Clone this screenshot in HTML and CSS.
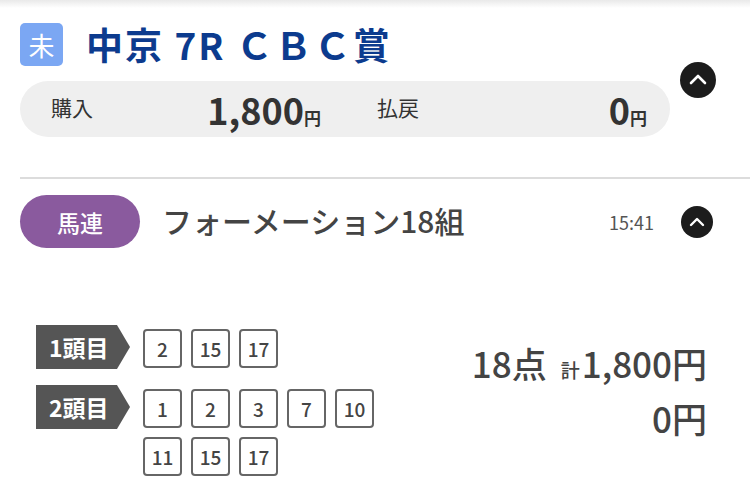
FILE: index.html
```html
<!DOCTYPE html>
<html lang="ja">
<head>
<meta charset="utf-8">
<link rel="stylesheet" href="styles.css">
</head>
<body>
<div class="shade"></div>
<header class="top">
  <div class="top-main">
    <div class="title-row">
      <div class="badge">未</div>
      <h1 class="title">中京 7R ＣＢＣ賞</h1>
    </div>
    <div class="summary">
      <div class="sum-item">
        <span class="sum-label">購入</span>
        <span class="sum-value">1,800<span class="yen">円</span></span>
      </div>
      <div class="sum-item">
        <span class="sum-label">払戻</span>
        <span class="sum-value">0<span class="yen">円</span></span>
      </div>
    </div>
  </div>
  <svg class="chev chev-lg" viewBox="0 0 36 36" aria-hidden="true">
    <circle cx="18" cy="18" r="18" fill="#1c1c1c"/>
    <polyline points="11,21 18,14 25,21" fill="none" stroke="#fff" stroke-width="2.6" stroke-linecap="round" stroke-linejoin="round"/>
  </svg>
</header>
<div class="divider"></div>
<section class="bet-row">
  <div class="bet-type">馬連</div>
  <div class="bet-name">フォーメーション18組</div>
  <div class="time">15:41</div>
  <svg class="chev chev-sm" viewBox="0 0 32 32" aria-hidden="true">
    <circle cx="16" cy="16" r="16" fill="#1c1c1c"/>
    <polyline points="10,19 16,13 22,19" fill="none" stroke="#fff" stroke-width="2.4" stroke-linecap="round" stroke-linejoin="round"/>
  </svg>
</section>
<section class="detail">
  <div class="groups">
    <div class="group">
      <div class="pos-label">1頭目</div>
      <div class="boxes">
        <span class="num">2</span><span class="num">15</span><span class="num">17</span>
      </div>
    </div>
    <div class="group">
      <div class="pos-label">2頭目</div>
      <div class="boxes">
        <span class="num">1</span><span class="num">2</span><span class="num">3</span><span class="num">7</span><span class="num">10</span><span class="num">11</span><span class="num">15</span><span class="num">17</span>
      </div>
    </div>
  </div>
  <div class="totals">
    <div class="tot-line">18点<span class="kei">計</span>1,800円</div>
    <div class="tot-line">0円</div>
  </div>
</section>
</body>
</html>
```
FILE: styles.css
```css
* { box-sizing: border-box; }
html, body { margin: 0; padding: 0; background: #fff; }
body {
  width: 750px;
  height: 500px;
  overflow: hidden;
  font-family: "Noto Sans CJK JP", "Noto Sans", sans-serif;
  color: #444;
}
.shade {
  height: 8px;
  background: linear-gradient(#e9e9e9, #ffffff);
}
.top {
  display: flex;
  align-items: center;
  margin-top: 15px;
  padding-left: 20px;
}
.top-main { width: 650px; }
.title-row {
  display: flex;
  align-items: center;
  gap: 23px;
  height: 43px;
}
.badge {
  width: 43px;
  height: 43px;
  border-radius: 5px;
  background: #7ba7f3;
  color: #fff;
  font-size: 26px;
  display: flex;
  align-items: center;
  justify-content: center;
}
.title {
  margin: 0;
  font-size: 37px;
  font-weight: 700;
  letter-spacing: 2px;
  color: #0c3b8e;
  line-height: 43px;
  white-space: nowrap;
}
.summary {
  margin-top: 15px;
  height: 56px;
  border-radius: 28px;
  background: #efefef;
  display: grid;
  grid-template-columns: 1fr 1fr;
  column-gap: 56px;
  padding: 0 23px 0 31px;
  align-items: center;
}
.sum-item {
  display: flex;
  justify-content: space-between;
  align-items: center;
}
.sum-label { font-size: 21px; color: #333; line-height: 1; margin-top: -3px; }
.sum-value { font-size: 36px; font-weight: 700; color: #333; line-height: 1; }
.yen { font-size: 17px; font-weight: 700; }
.chev { display: block; flex: none; }
.chev-lg { width: 36px; height: 36px; margin-left: 10px; }
.divider {
  margin: 40px 0 0 20px;
  height: 2px;
  background: #dcdcdc;
}
.bet-row {
  display: flex;
  align-items: center;
  margin-top: 16px;
  padding-left: 20px;
}
.bet-type {
  width: 120px;
  height: 53px;
  border-radius: 27px;
  background: #8a5a9e;
  color: #fff;
  font-size: 23px;
  font-weight: 500;
  display: flex;
  align-items: center;
  justify-content: center;
}
.bet-name {
  flex: 1;
  margin-left: 22px;
  font-size: 30px;
  font-weight: 500;
  color: #444;
  white-space: nowrap;
  margin-top: -4px;
}
.time { font-size: 18px; color: #555; }
.chev-sm { width: 32px; height: 32px; margin-left: 27px; margin-right: 37px; }
.detail {
  display: flex;
  margin-top: 77px;
  padding-left: 36px;
}
.groups {
  display: flex;
  flex-direction: column;
  gap: 16px;
}
.group {
  display: flex;
  align-items: flex-start;
}
.pos-label {
  width: 94px;
  height: 44px;
  background: #555;
  color: #fff;
  font-size: 23px;
  font-weight: 700;
  display: flex;
  align-items: center;
  padding-left: 13px;
  clip-path: polygon(0 0, 81px 0, 94px 50%, 81px 100%, 0 100%);
  flex: none;
}
.boxes {
  display: flex;
  flex-wrap: wrap;
  gap: 9px;
  width: 231px;
  margin-left: 13px;
  padding-top: 4px;
}
.num {
  width: 39px;
  height: 39px;
  border: 2px solid #666;
  border-radius: 4px;
  display: flex;
  align-items: center;
  justify-content: center;
  font-size: 19px;
  font-weight: 500;
  color: #444;
}
.totals {
  margin-left: auto;
  margin-right: 43px;
  padding-top: 10px;
  text-align: right;
}
.tot-line {
  font-size: 35px;
  font-weight: 500;
  height: 55px;
  line-height: 55px;
  color: #444;
}
.kei { font-size: 19px; line-height: 1; margin: 0 2px 0 14px; }
```
